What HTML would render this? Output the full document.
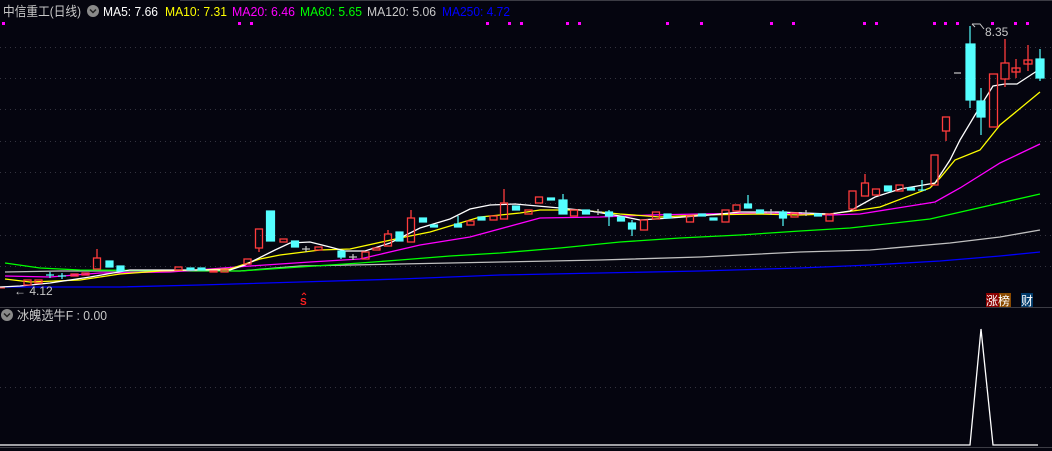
<!DOCTYPE html>
<html><head><meta charset="utf-8"><style>
html,body{margin:0;padding:0;background:#05050f;width:1052px;height:451px;overflow:hidden}
svg{display:block}
text{font-family:"Liberation Sans","Noto Sans CJK SC",sans-serif}
</style></head><body>
<svg width="1052" height="451" viewBox="0 0 1052 451">
<rect width="1052" height="451" fill="#05050f"/>
<g stroke="#34343f" stroke-width="1" stroke-dasharray="1 4">
<line x1="0" y1="47.5" x2="1052" y2="47.5"/><line x1="0" y1="78.5" x2="1052" y2="78.5"/>
<line x1="0" y1="109.5" x2="1052" y2="109.5"/><line x1="0" y1="141.5" x2="1052" y2="141.5"/>
<line x1="0" y1="172.5" x2="1052" y2="172.5"/><line x1="0" y1="203.5" x2="1052" y2="203.5"/>
<line x1="0" y1="235.5" x2="1052" y2="235.5"/><line x1="0" y1="266.5" x2="1052" y2="266.5"/>
<line x1="0" y1="387.5" x2="1052" y2="387.5"/>
</g>
<line x1="0" y1="307.5" x2="1052" y2="307.5" stroke="#3c3c44"/>
<line x1="0" y1="447.5" x2="1052" y2="447.5" stroke="#3c3c44"/>
<line x1="180" y1="0.5" x2="1052" y2="0.5" stroke="#3c3c44"/>
<text x="3" y="16" font-size="13" fill="#c8c8c8" textLength="78" lengthAdjust="spacingAndGlyphs">中信重工(日线)</text>
<circle cx="93" cy="11" r="6" fill="#8a8a8a"/><path d="M90 9.5 L93 12.5 L96 9.5" stroke="#222" stroke-width="1.5" fill="none"/>
<text x="103" y="16" font-size="13" fill="#ffffff" textLength="55" lengthAdjust="spacingAndGlyphs">MA5: 7.66</text>
<text x="165" y="16" font-size="13" fill="#ffff00" textLength="62" lengthAdjust="spacingAndGlyphs">MA10: 7.31</text>
<text x="232" y="16" font-size="13" fill="#ff00ff" textLength="63" lengthAdjust="spacingAndGlyphs">MA20: 6.46</text>
<text x="300" y="16" font-size="13" fill="#00ff00" textLength="62" lengthAdjust="spacingAndGlyphs">MA60: 5.65</text>
<text x="367" y="16" font-size="13" fill="#c8c8c8" textLength="69" lengthAdjust="spacingAndGlyphs">MA120: 5.06</text>
<text x="442" y="16" font-size="13" fill="#0000ff" textLength="68" lengthAdjust="spacingAndGlyphs">MA250: 4.72</text>
<g fill="#ff00ff">
<rect x="2" y="22" width="3" height="3"/><rect x="238" y="22" width="3" height="3"/><rect x="250" y="22" width="3" height="3"/>
<rect x="486" y="22" width="3" height="3"/><rect x="508" y="22" width="3" height="3"/><rect x="520" y="22" width="3" height="3"/>
<rect x="566" y="22" width="3" height="3"/><rect x="578" y="22" width="3" height="3"/><rect x="666" y="22" width="3" height="3"/>
<rect x="700" y="22" width="3" height="3"/><rect x="770" y="22" width="3" height="3"/><rect x="792" y="22" width="3" height="3"/>
<rect x="863" y="22" width="3" height="3"/><rect x="875" y="22" width="3" height="3"/><rect x="933" y="22" width="3" height="3"/>
<rect x="944" y="22" width="3" height="3"/><rect x="956" y="22" width="3" height="3"/><rect x="991" y="22" width="3" height="3"/>
<rect x="1014" y="22" width="3" height="3"/><rect x="1026" y="22" width="3" height="3"/>
</g>
<g fill="none" stroke-width="1.3">
<polyline stroke="#0000ff" points="5,287 120,287 200,285 300,282 400,279 500,275 600,273 700,271 800,268 870,265 940,261 1000,256 1040,252"/>
<polyline stroke="#c0c0c0" points="5,272 60,271 240,271 300,266 400,264 450,263 500,262 600,260 700,257 800,252 870,250 950,243 1000,237 1040,230"/>
<polyline stroke="#00ff00" points="5,263 40,268 80,270 240,271 300,267 360,263 400,260 450,256 500,253 560,248 620,242 680,238 740,235 800,231 850,228 930,219 1040,194"/>
<polyline stroke="#ff00ff" points="5,276 50,277 100,273 170,272 250,266 310,262 360,259 420,245 470,237 540,218 600,217 650,215 700,214 780,213 830,215 860,214 935,202 960,188 1000,163 1040,144"/>
<polyline stroke="#ffff00" points="5,279 30,282 80,280 120,274 160,271 230,269 260,259 280,255 320,250 350,249 400,238 430,232 480,217 520,213 540,210 580,210 620,214 660,217 700,215 760,214 800,215 830,214 860,210 880,207 930,188 940,178 955,160 980,150 1000,125 1040,92"/>
<polyline stroke="#ffffff" points="0,287 20,286 50,283 90,277 130,270 230,270 245,265 275,250 290,243 310,242 330,247 345,251 365,251 390,243 420,228 450,219 470,209 490,205 515,204 560,208 590,211 620,216 640,220 670,218 710,215 740,212 780,212 830,214 850,211 875,197 900,189 935,183 950,160 960,140 975,115 993,86 1005,84 1017,84 1040,69"/>
</g>
<g fill="none" stroke="#ff3c3c" stroke-width="1.3">
<rect x="24" y="280" width="7" height="5"/><rect x="35" y="280" width="7" height="3"/><rect x="71" y="274" width="7" height="2"/><rect x="82" y="273" width="7" height="2"/>
<line x1="97" y1="249" x2="97" y2="258"/><rect x="93.5" y="258" width="7" height="11"/>
<rect x="175" y="267" width="7" height="3"/><rect x="210" y="271" width="7" height="1"/><rect x="221" y="270" width="7" height="2"/>
<rect x="244" y="259" width="7" height="5"/>
<line x1="259" y1="248" x2="259" y2="252"/><rect x="255.5" y="229" width="7" height="19"/>
<rect x="280" y="239" width="7" height="3"/><rect x="315" y="247" width="7" height="3"/>
<rect x="362" y="252" width="7" height="7"/><rect x="373" y="248" width="7" height="2"/>
<line x1="388" y1="230" x2="388" y2="234"/><rect x="384.5" y="234" width="7" height="12"/>
<line x1="411" y1="210" x2="411" y2="218"/><rect x="407.5" y="218" width="7" height="24"/>
<rect x="467" y="221" width="7" height="4"/><rect x="490" y="216" width="7" height="4"/>
<line x1="504" y1="189" x2="504" y2="203"/><rect x="500.5" y="203" width="7" height="16"/>
<rect x="525" y="210" width="7" height="4"/><rect x="535.5" y="197" width="7" height="6"/>
<rect x="570.5" y="210" width="7" height="6"/><rect x="640.5" y="220" width="7" height="10"/>
<rect x="652.5" y="212" width="7" height="7"/><rect x="686.5" y="216" width="7" height="6"/>
<rect x="722" y="210" width="7" height="12"/><rect x="733" y="205" width="7" height="6"/>
<rect x="791" y="213" width="7" height="4"/><rect x="826" y="214" width="7" height="7"/>
<rect x="849" y="191" width="7" height="18"/>
<line x1="865" y1="174" x2="865" y2="183"/><rect x="861.5" y="183" width="7" height="13"/>
<rect x="872.5" y="189" width="7" height="6"/><rect x="896" y="185" width="7" height="6"/>
<rect x="931" y="155" width="7" height="30"/>
<line x1="946" y1="131" x2="946" y2="141"/><rect x="942.5" y="117" width="7" height="14"/>
<rect x="989.5" y="74" width="8" height="53"/>
<line x1="1005" y1="39" x2="1005" y2="63"/><line x1="1005" y1="79" x2="1005" y2="87"/><rect x="1001" y="63" width="8" height="16"/>
<line x1="1016" y1="59" x2="1016" y2="78"/><rect x="1012" y="68" width="8" height="4"/>
<line x1="1028" y1="45" x2="1028" y2="71"/><rect x="1024" y="60" width="8" height="4"/>
</g>
<g fill="#54ffff" stroke="#54ffff" stroke-width="1.2">
<line x1="50" y1="272" x2="50" y2="278"/><line x1="46" y1="275" x2="54" y2="275"/>
<line x1="62" y1="273" x2="62" y2="279"/><line x1="58" y1="276" x2="66" y2="276"/>
<rect x="106" y="261" width="7" height="6"/><rect x="117" y="266" width="7" height="5"/>
<rect x="187" y="268" width="7" height="2"/><rect x="198" y="268" width="7" height="2"/>
<rect x="266.5" y="211" width="8" height="30"/><rect x="291.5" y="241" width="7" height="6"/>
<rect x="338" y="251" width="7" height="6"/><line x1="341" y1="257" x2="341" y2="259"/>
<rect x="396" y="232" width="7" height="9"/>
<rect x="419.5" y="218" width="7" height="4"/><rect x="430.5" y="225" width="7" height="2"/>
<line x1="458" y1="216" x2="458" y2="224"/><rect x="454.5" y="224" width="7" height="3"/>
<rect x="478" y="217" width="7" height="3"/><rect x="512.5" y="206" width="7" height="4"/>
<rect x="547.5" y="198" width="7" height="2"/>
<line x1="563" y1="194" x2="563" y2="214"/><rect x="559" y="200" width="8" height="14"/>
<rect x="582.5" y="210" width="7" height="4"/>
<line x1="609" y1="210" x2="609" y2="226"/><rect x="605.5" y="212" width="7" height="4"/>
<rect x="617.5" y="217" width="7" height="4"/>
<line x1="632" y1="220" x2="632" y2="236"/><rect x="628.5" y="223" width="7" height="6"/>
<rect x="664" y="214" width="7" height="4"/><rect x="698.5" y="214" width="7" height="2"/><rect x="710" y="218" width="7" height="2"/>
<line x1="748" y1="195" x2="748" y2="204"/><rect x="744.5" y="204" width="7" height="4"/>
<rect x="756.5" y="210" width="7" height="3"/>
<line x1="783" y1="210" x2="783" y2="226"/><rect x="779.5" y="212" width="7" height="6"/>
<rect x="814.5" y="214" width="7" height="2"/>
<rect x="884.5" y="186" width="7" height="5"/><rect x="907.5" y="188" width="7" height="2"/>
<line x1="922" y1="180" x2="922" y2="191"/><line x1="918" y1="190" x2="926" y2="190"/>
<line x1="970" y1="26" x2="970" y2="108"/><rect x="966" y="44" width="9" height="56"/>
<line x1="981" y1="88" x2="981" y2="135"/><rect x="977" y="101" width="8" height="16"/>
<line x1="1040" y1="49" x2="1040" y2="81"/><rect x="1036" y="59" width="8" height="19"/>
</g>
<g stroke="#c8c8c8" stroke-width="1.2">
<line x1="306" y1="246" x2="306" y2="252"/><line x1="302" y1="249" x2="310" y2="249"/>
<line x1="353" y1="254" x2="353" y2="260"/><line x1="349" y1="257" x2="357" y2="257"/>
<line x1="598" y1="209" x2="598" y2="215"/><line x1="594" y1="212" x2="602" y2="212"/>
<line x1="771" y1="209" x2="771" y2="215"/><line x1="767" y1="212" x2="775" y2="212"/>
<line x1="806" y1="210" x2="806" y2="216"/><line x1="802" y1="213" x2="810" y2="213"/>
<line x1="954" y1="73" x2="961" y2="73"/>
</g>
<line x1="0" y1="288" x2="5" y2="288" stroke="#ff3c3c"/>
<path d="M975 27 L972 24 M972 24 L980 24 L984 29" stroke="#c8c8c8" fill="none"/>
<text x="985" y="36" font-size="12" fill="#c8c8c8">8.35</text>
<text x="14" y="295" font-size="12" fill="#c8c8c8">← 4.12</text>
<text x="300" y="305" font-size="10" fill="#ff2020" font-weight="bold">S</text>
<path d="M302 295 L304 293 L306 295" stroke="#ff2020" fill="none"/>
<rect x="986" y="293" width="13" height="14" fill="#8a0000"/>
<rect x="999" y="293" width="12" height="14" fill="#8a4a00"/>
<rect x="1021" y="293" width="12" height="14" fill="#003a6a"/>
<text x="986" y="305" font-size="12" fill="#ffffff">涨榜</text>
<text x="1021" y="305" font-size="12" fill="#ffffff">财</text>
<circle cx="7" cy="315" r="6" fill="#8a8a8a"/><path d="M4 313.5 L7 316.5 L10 313.5" stroke="#222" stroke-width="1.5" fill="none"/>
<text x="17" y="320" font-size="13" fill="#c8c8c8" textLength="90" lengthAdjust="spacingAndGlyphs">冰魄选牛F : 0.00</text>
<polyline fill="none" stroke="#ffffff" stroke-width="1.3" points="0,445 970,445 981,329 993,445 1038,445"/>
</svg>
</body></html>
